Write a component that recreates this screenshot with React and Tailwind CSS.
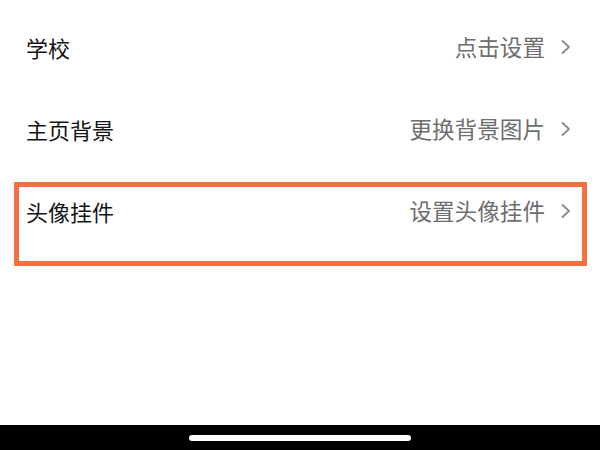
const ROWS = [
  { label: '学校', value: '点击设置' },
  { label: '主页背景', value: '更换背景图片' },
  { label: '头像挂件', value: '设置头像挂件' },
]

function Chevron() {
  return (
    <svg width="12" height="16" viewBox="0 0 12 16" fill="none" className="text-[#8a8a8a]">
      <path d="M2.5 2 L9 8 L2.5 14" stroke="currentColor" strokeWidth="1.8" strokeLinecap="round" strokeLinejoin="round" />
    </svg>
  )
}

function SettingRow({ label, value }) {
  return (
    <div className="h-[82px] flex items-center justify-between pl-[26px] pr-[28px]">
      <span className="text-[22px] text-[#141414] leading-none">{label}</span>
      <div className="flex items-center gap-[15px]">
        <span className="text-[22.6px] text-[#6e6e6e] leading-none">{value}</span>
        <Chevron />
      </div>
    </div>
  )
}

export default function App() {
  return (
    <div
      className="w-[600px] h-[450px] bg-white flex flex-col overflow-hidden"
      style={{ fontFamily: '"Noto Sans CJK SC", "Noto Sans", sans-serif' }}
    >
      <div className="relative flex-1 pt-[6px]">
        {ROWS.map((r) => (
          <SettingRow key={r.label} label={r.label} value={r.value} />
        ))}
        {/* highlight box */}
        <div className="absolute left-[14px] top-[182px] w-[573px] h-[84px] border-[5px] border-[#f66f40] pointer-events-none" />
      </div>
      <div className="h-[25px] bg-black flex items-center justify-center">
        <div className="w-[222px] h-[6px] rounded-full bg-white" />
      </div>
    </div>
  )
}
